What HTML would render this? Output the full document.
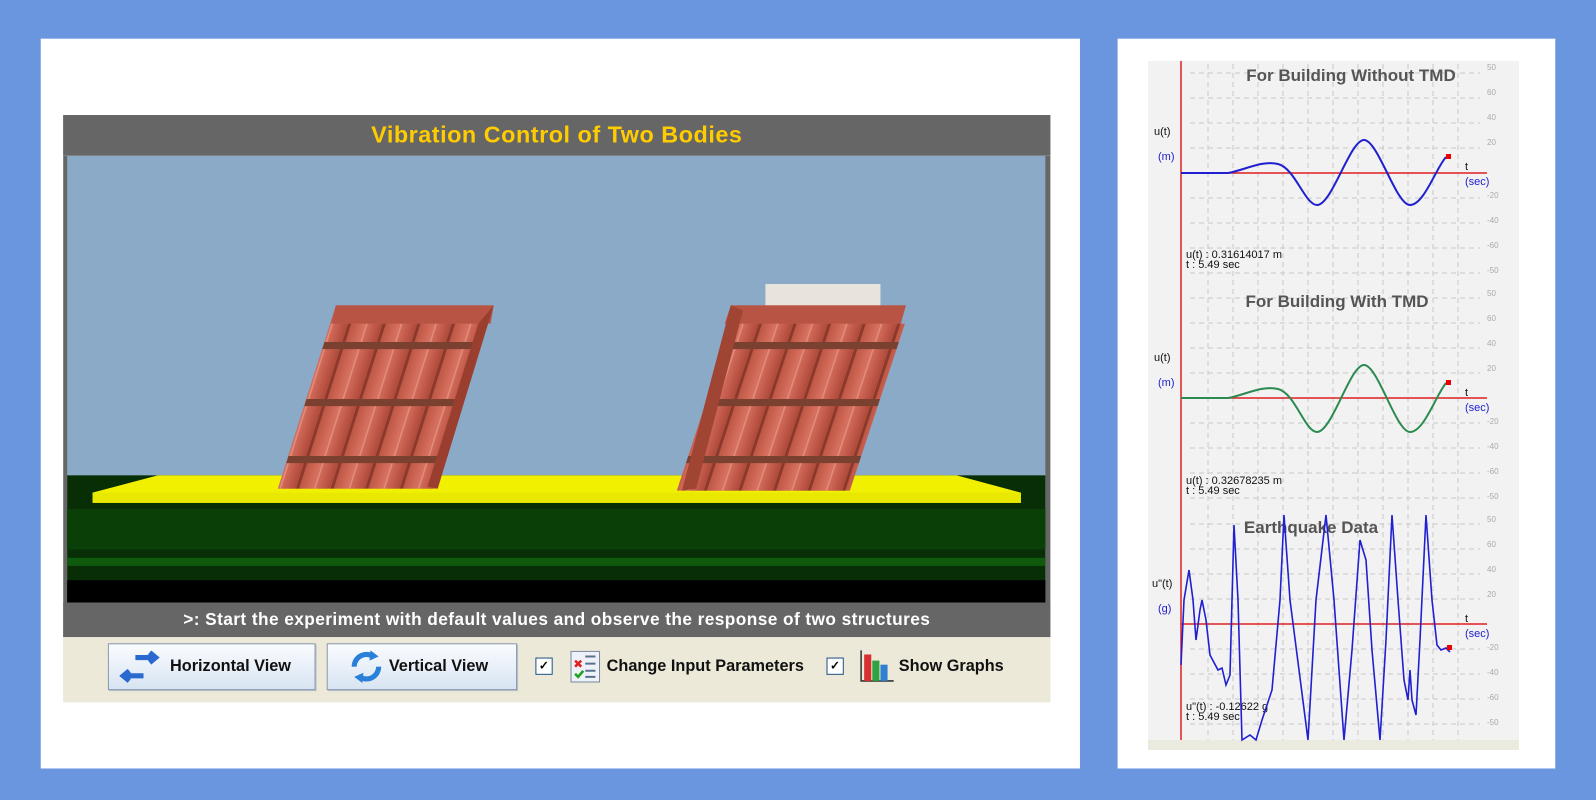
<!DOCTYPE html>
<html><head><meta charset="utf-8"><style>
html,body{margin:0;padding:0;width:1596px;height:800px;overflow:hidden;background:#6a96df;font-family:"Liberation Sans",sans-serif}
#w{position:absolute;left:0;top:0;width:1568px;height:786px;transform:scale(1.017857);transform-origin:0 0}
.a{position:absolute}
.btn{position:absolute;top:632px;height:44px;border:1px solid #8a9ab0;background:linear-gradient(#fafcff,#d8e4f2);box-shadow:1px 1px 0 #b8c0cc;font:bold 16px "Liberation Sans",sans-serif;color:#111;display:flex;align-items:center}
.cb{position:absolute;top:646px;width:15px;height:15px;border:1px solid #1c5180;background:#fff;font:bold 12px sans-serif;text-align:center;line-height:15px}
.lbl{position:absolute;top:646px;font:bold 16px "Liberation Sans",sans-serif;color:#111}
</style></head><body>
<div id="w">
<div class="a" style="left:40px;top:38px;width:1021px;height:717px;background:#fff"></div>
<div class="a" style="left:1098px;top:38px;width:430px;height:717px;background:#fff"></div>
<div class="a" style="left:62px;top:113px;width:970px;height:40px;background:#666;color:#ffcc00;font:bold 23px 'Liberation Sans',sans-serif;text-align:center;line-height:38px;letter-spacing:0.5px">Vibration Control of Two Bodies</div>
<svg class="a" style="left:62px;top:153px" width="970" height="440" viewBox="62 153 970 440">
<rect x="62" y="153" width="970" height="440" fill="#666"/>
<rect x="66" y="153" width="961" height="439" fill="#8aaac8"/>
<rect x="66" y="467" width="961" height="125" fill="#082e06"/>
<rect x="66" y="500" width="961" height="40" fill="#0a3f08"/>
<rect x="66" y="548" width="961" height="8" fill="#0f5a0d"/>
<rect x="66" y="570" width="961" height="22" fill="#000"/>
<polygon points="155,467 940,467 1003,484 1003,494 91,494 91,484" fill="#f0f000"/>
<rect x="91" y="484" width="912" height="10" fill="#e8e800"/>
<defs>
<linearGradient id="br" x1="0" x2="1"><stop offset="0" stop-color="#b8503e"/><stop offset=".5" stop-color="#d87060"/><stop offset="1" stop-color="#b04a3a"/></linearGradient>
<pattern id="bp" width="34" height="56" patternUnits="userSpaceOnUse"><rect width="34" height="56" fill="url(#br)"/><rect y="0" width="34" height="7" fill="#7a4030"/><line x1="2" y1="7" x2="2" y2="56" stroke="#8a3a2c" stroke-width="3"/><line x1="19" y1="7" x2="19" y2="56" stroke="#e09080" stroke-width="1.5"/></pattern>
</defs>
<g>
<polygon points="330,300 485,300 430,480 273,480" fill="#c8604c"/>
<g transform="matrix(1,0,-0.316,1,0,0)"><rect x="425" y="318" width="152" height="162" fill="url(#bp)"/></g>
<polygon points="330,300 485,300 482,318 326,318" fill="#b85444"/>
<polygon points="470,318 485,300 430,480 420,478" fill="#9a3e30"/>
</g>
<rect x="752" y="279" width="113" height="22" fill="#e8e4dc"/>
<g>
<polygon points="718,300 890,300 830,482 670,482" fill="#c8604c"/>
<g transform="matrix(1,0,-0.33,1,0,0)"><rect x="824" y="318" width="170" height="164" fill="url(#bp)"/></g>
<polygon points="718,300 890,300 885,318 712,318" fill="#b85444"/>
<polygon points="718,300 730,305 684,480 670,482" fill="#a04434"/>
</g>
</svg>
<div class="a" style="left:62px;top:592px;width:970px;height:34px;background:#666;color:#fff;font:bold 17px 'Liberation Sans',sans-serif;text-align:center;line-height:34px;letter-spacing:0.4px">&gt;: Start the experiment with default values and observe the response of two structures</div>
<div class="a" style="left:62px;top:626px;width:970px;height:64px;background:#ece9d8"></div>
<div class="btn" style="left:106px;width:202px"><svg width="60" height="36" viewBox="0 0 60 36"><path d="M26 9H44M40 4l6 5-6 5M34 27H16M20 22l-6 5 6 5" stroke="#2a6ad0" stroke-width="5" fill="none"/></svg>Horizontal View</div>
<div class="btn" style="left:321px;width:185px"><svg width="60" height="36" viewBox="0 0 60 36"><path d="M26 18a12 12 0 0 1 20-9M50 18a12 12 0 0 1-20 9" stroke="#2a80d8" stroke-width="5" fill="none"/><path d="M42 2l8 6-9 4zM34 34l-8-6 9-4z" fill="#2a80d8"/></svg>Vertical View</div>
<div class="cb" style="left:526px">✓</div>
<svg class="a" style="left:560px;top:639px" width="30" height="32"><rect x="1" y="1" width="28" height="30" fill="#eef2f8" stroke="#7a8aa0"/><path d="M5 10l6 6M11 10l-6 6" stroke="#e02020" stroke-width="2.5"/><path d="M5 23l3 3 5-6" stroke="#20a020" stroke-width="2.5" fill="none"/><path d="M15 6h10M15 13h10M15 20h10M15 26h10" stroke="#5a7090" stroke-width="2"/></svg>
<div class="lbl" style="left:596px">Change Input Parameters</div>
<div class="cb" style="left:812px">✓</div>
<svg class="a" style="left:844px;top:637px" width="36" height="34"><path d="M2 2v30h32" stroke="#333" stroke-width="1.5" fill="none"/><rect x="5" y="6" width="7" height="26" fill="#d83030"/><rect x="13" y="12" width="7" height="20" fill="#30a040"/><rect x="21" y="16" width="7" height="16" fill="#3080d0"/></svg>
<div class="lbl" style="left:883px">Show Graphs</div>
</div>
<svg class="a" style="left:0;top:0" width="1596" height="800" viewBox="0 0 1596 800" font-family="Liberation Sans,sans-serif">
<rect x="1148" y="61" width="371" height="689" fill="#f2f2f2"/>
<rect x="1148" y="740" width="371" height="10" fill="#ebeade"/>
<g stroke="#c8c8c8" stroke-dasharray="5,4" stroke-width="1">
<path d="M1190 73H1480M1190 98H1480M1190 123H1480M1190 148H1480M1190 198H1480M1190 223H1480M1190 248H1480M1190 273H1480"/>
<path d="M1190 298H1480M1190 323H1480M1190 348H1480M1190 373H1480M1190 423H1480M1190 448H1480M1190 473H1480M1190 498H1480"/>
<path d="M1190 524H1480M1190 549H1480M1190 574H1480M1190 599H1480M1190 649H1480M1190 674H1480M1190 699H1480M1190 724H1480"/>
<path d="M1208 64V740M1233 64V740M1258 64V740M1283 64V740M1308 64V740M1333 64V740M1358 64V740M1383 64V740M1408 64V740M1433 64V740M1458 64V740"/>
</g>
<g fill="#aaa" font-size="8">
<text x="1487" y="70">50</text><text x="1487" y="95">60</text><text x="1487" y="120">40</text><text x="1487" y="145">20</text><text x="1487" y="198">-20</text><text x="1487" y="223">-40</text><text x="1487" y="248">-60</text><text x="1487" y="273">-50</text>
<text x="1487" y="296">50</text><text x="1487" y="321">60</text><text x="1487" y="346">40</text><text x="1487" y="371">20</text><text x="1487" y="424">-20</text><text x="1487" y="449">-40</text><text x="1487" y="474">-60</text><text x="1487" y="499">-50</text>
<text x="1487" y="522">50</text><text x="1487" y="547">60</text><text x="1487" y="572">40</text><text x="1487" y="597">20</text><text x="1487" y="650">-20</text><text x="1487" y="675">-40</text><text x="1487" y="700">-60</text><text x="1487" y="725">-50</text>
</g>
<line x1="1181" y1="61" x2="1181" y2="740" stroke="#e02020" stroke-width="1.5"/>
<g stroke="#e02020" stroke-width="1.5"><path d="M1181 173H1487M1181 398H1487M1181 624H1487"/></g>
<g fill="#555" font-weight="bold" font-size="17" text-anchor="middle">
<text x="1351" y="81">For Building Without TMD</text><text x="1337" y="307">For Building With TMD</text><text x="1311" y="533">Earthquake Data</text></g>
<g font-size="11" fill="#111"><text x="1154" y="135">u(t)</text><text x="1154" y="361">u(t)</text><text x="1152" y="587">u"(t)</text>
<text x="1465" y="170">t</text><text x="1465" y="396">t</text><text x="1465" y="622">t</text>
<text x="1186" y="258">u(t) : 0.31614017 m</text><text x="1186" y="268">t   : 5.49 sec</text>
<text x="1186" y="484">u(t) : 0.32678235 m</text><text x="1186" y="494">t   : 5.49 sec</text>
<text x="1186" y="710">u"(t) : -0.12622 g</text><text x="1186" y="720">t   : 5.49 sec</text></g>
<g font-size="11" fill="#2020d0"><text x="1158" y="160">(m)</text><text x="1158" y="386">(m)</text><text x="1158" y="612">(g)</text>
<text x="1465" y="185">(sec)</text><text x="1465" y="411">(sec)</text><text x="1465" y="637">(sec)</text></g>
<path d="M1181 173H1228C1245 170 1262 160 1278 164C1295 168 1305 205 1317 205C1332 205 1350 140 1364 140C1378 140 1396 205 1410 205C1424 205 1436 168 1446 157" stroke="#2020d0" stroke-width="2" fill="none"/>
<path d="M1181 398H1228C1245 395 1262 385 1278 389C1295 393 1305 432 1317 432C1332 432 1350 365 1364 365C1378 365 1396 432 1410 432C1424 432 1436 395 1446 383" stroke="#2a8a50" stroke-width="2" fill="none"/>
<path d="M1181 665L1184 600L1189 570L1193 600L1196 640L1200 610L1202 600L1206 620L1210 655L1218 670L1222 668L1226 685L1230 675L1234 525L1238 600L1242 740L1250 735L1256 740L1262 720L1272 690L1280 600L1284 515L1290 600L1308 740L1316 600L1326 515L1334 600L1344 740L1352 650L1360 540L1366 560L1372 650L1380 740L1386 640L1392 515L1398 600L1404 680L1408 700L1410 670L1412 700L1416 715L1420 640L1426 515L1432 600L1437 645L1441 650L1446 648L1450 652" stroke="#2020d0" stroke-width="1.6" fill="none"/>
<rect x="1446" y="154" width="5" height="5" fill="#e00"/><rect x="1446" y="380" width="5" height="5" fill="#e00"/><rect x="1447" y="645" width="5" height="5" fill="#e00"/>
</svg>
</body></html>
